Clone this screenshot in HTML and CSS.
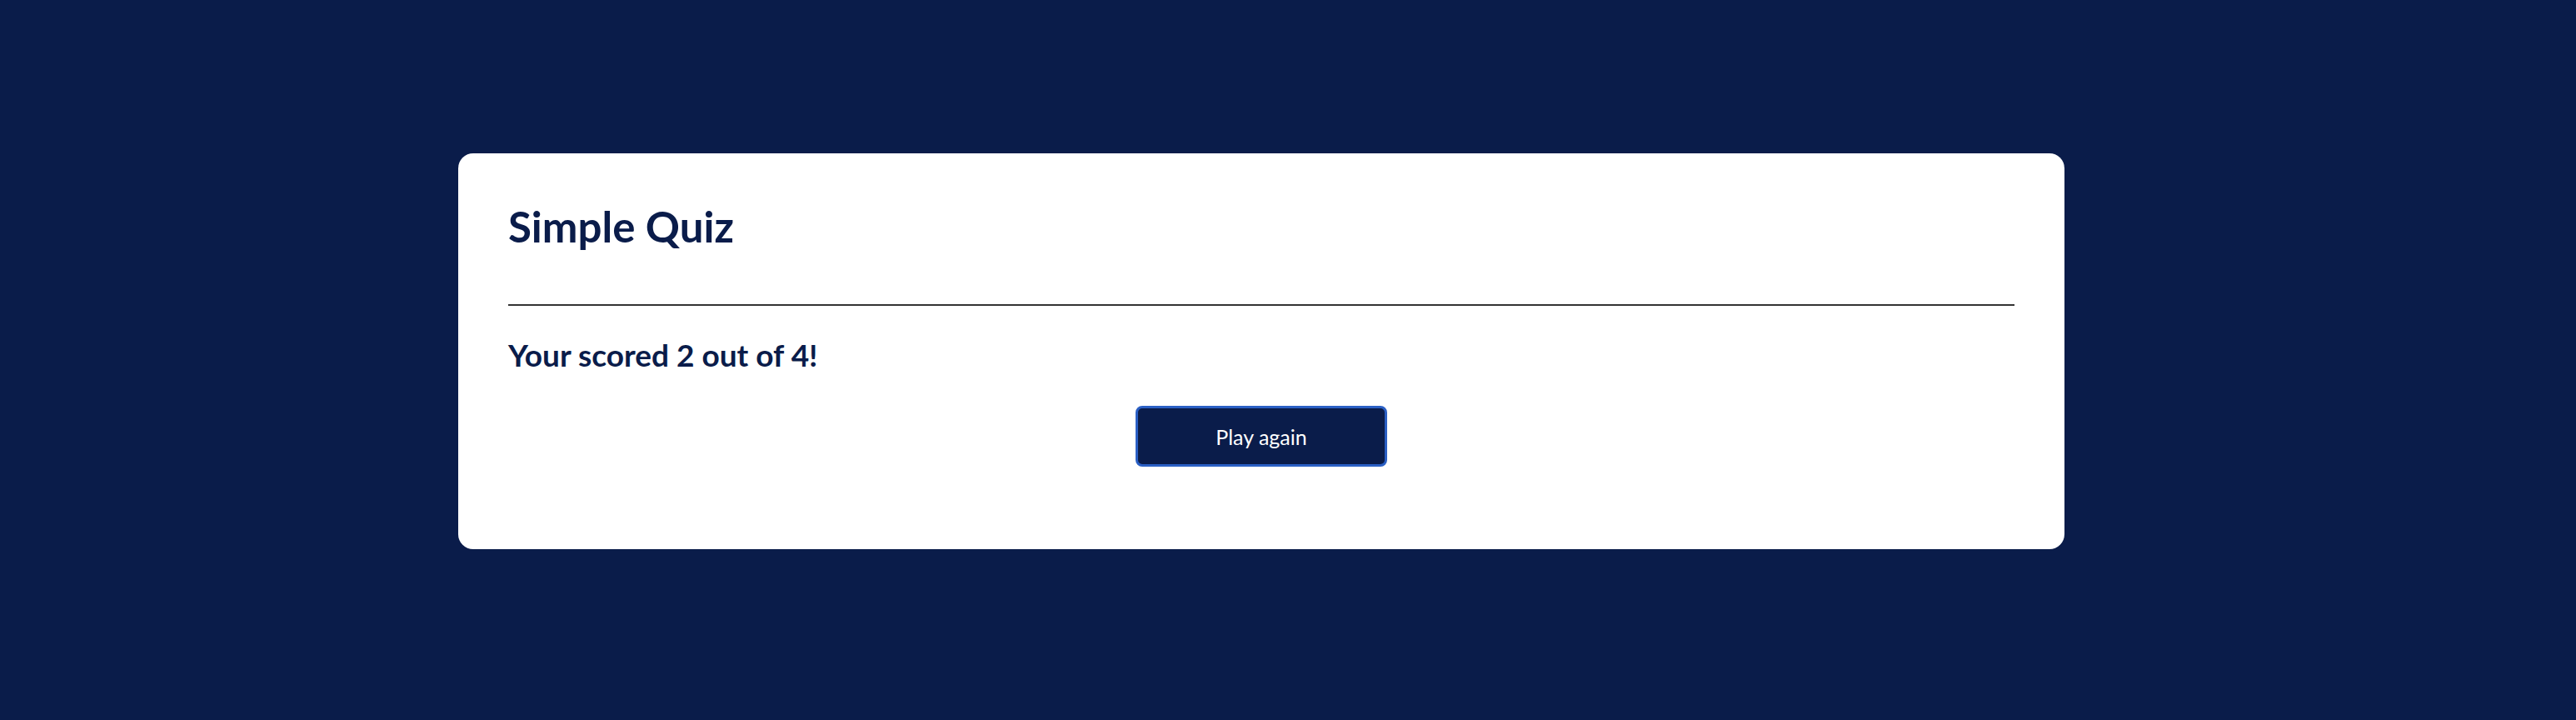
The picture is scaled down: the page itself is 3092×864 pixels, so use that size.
FILE: index.html
```html
<!DOCTYPE html>
<html>
<head>
<meta charset="utf-8">
<link rel="stylesheet" href="styles.css">
</head>
<body>
<div class="card">
  <h1 class="title">Simple Quiz</h1>
  <hr class="divider">
  <h2 class="score">Your scored 2 out of 4!</h2>
  <div class="actions">
    <button class="btn">Play again</button>
  </div>
</div>
</body>
</html>
```
FILE: styles.css
```css
html, body {
  margin: 0;
  padding: 0;
}
body {
  background: #0a1c4a;
  font-family: Lato, "Open Sans", sans-serif;
  color: #0a1c4a;
  width: 3092px;
  height: 864px;
  overflow: hidden;
  padding-top: 184px;
  box-sizing: border-box;
}
.card {
  margin-left: 550px;
  width: 1928px;
  height: 475px;
  box-sizing: border-box;
  background: #ffffff;
  border-radius: 18px;
  padding: 58px 60px 60px;
  display: flex;
  flex-direction: column;
}
.title {
  margin: 0;
  font-size: 51px;
  font-weight: 700;
  line-height: 60px;
}
.divider {
  margin: 63px 0 0 0;
  border: 0;
  height: 2px;
  background: #333333;
}
.score {
  margin: 36px 0 0 0;
  font-size: 37px;
  font-weight: 700;
  line-height: 46px;
}
.actions {
  display: flex;
  justify-content: center;
  margin-top: 38px;
}
.btn {
  width: 302px;
  height: 73px;
  background: #0a1c4a;
  color: #ffffff;
  border: 3px solid #2a5fc4;
  border-radius: 8px;
  font-family: Lato, "Open Sans", sans-serif;
  font-size: 25px;
  font-weight: 400;
}
```
